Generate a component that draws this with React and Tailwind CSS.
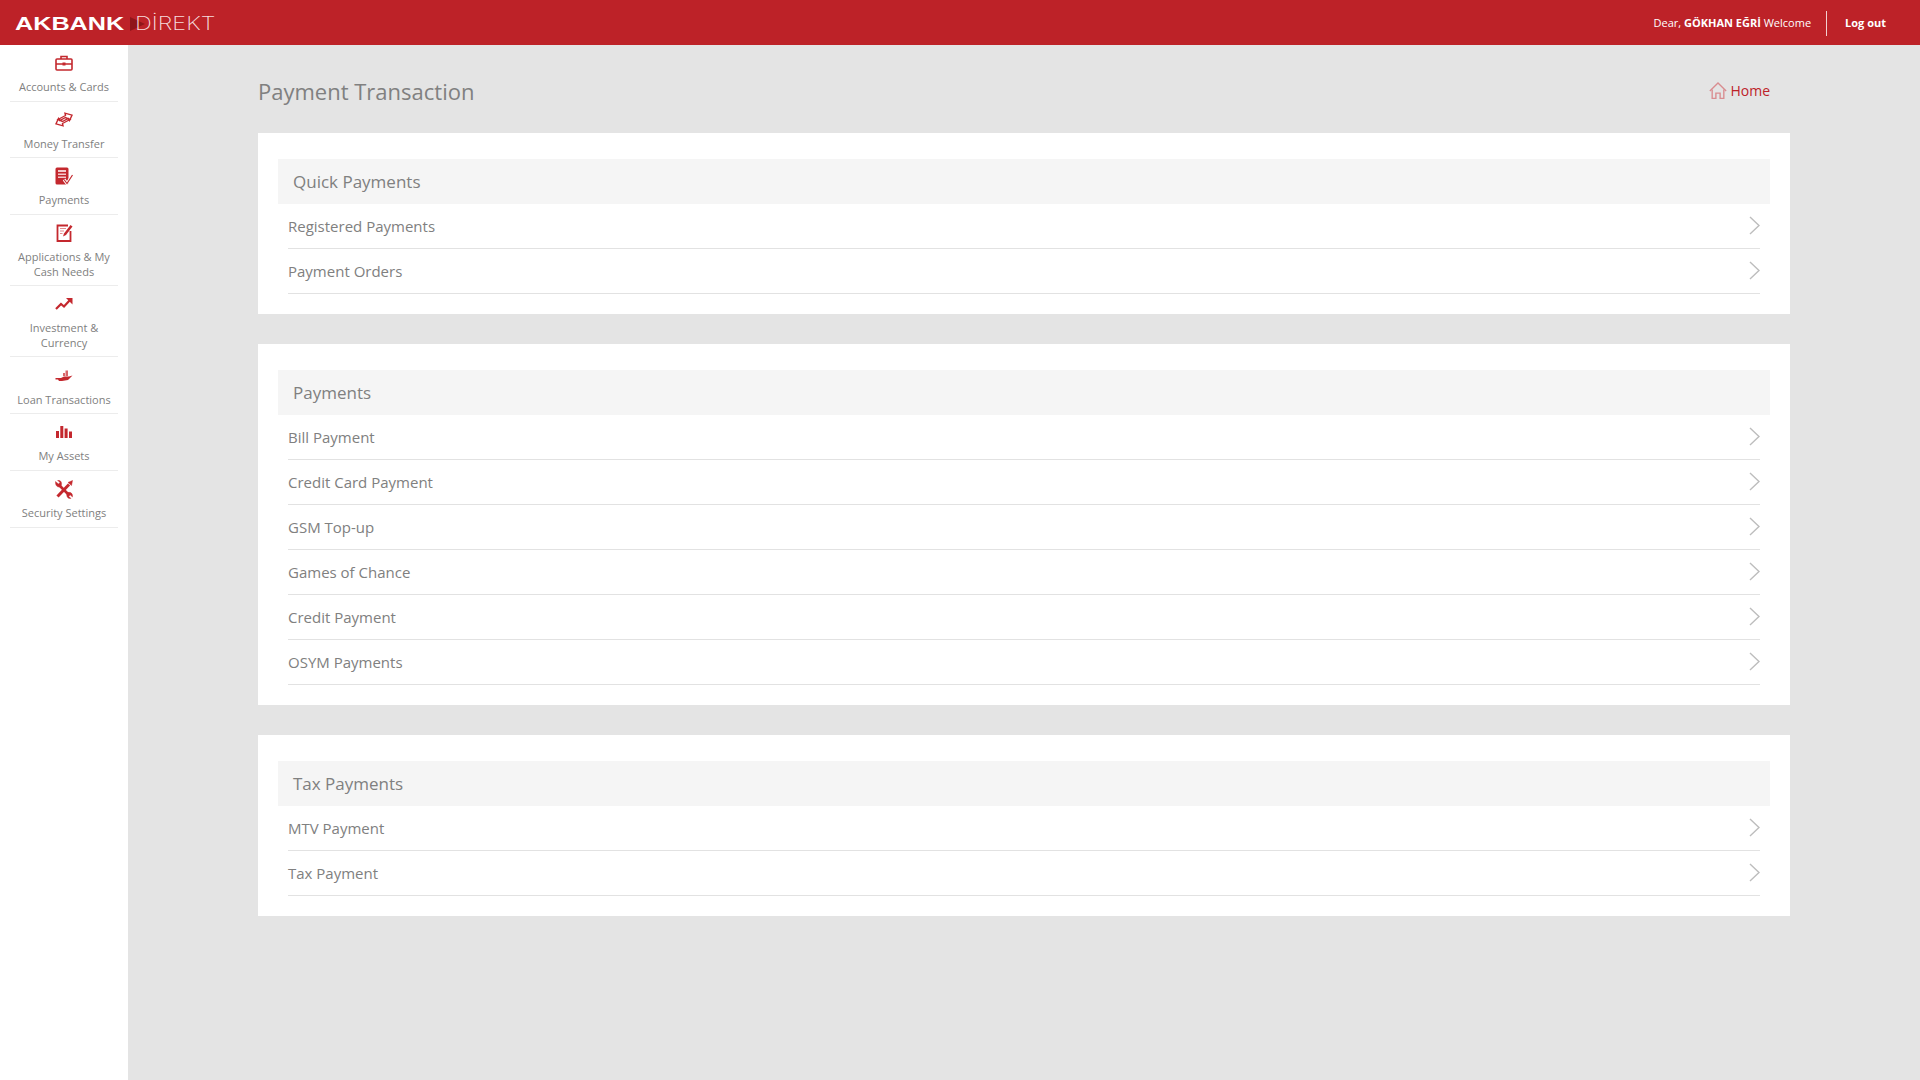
import React from 'react';

const Briefcase = () => (
    <svg width="18" height="16" viewBox="0 0 18 16" fill="none" stroke="#c4282e" strokeWidth="1.6">
        <rect x="1" y="4" width="16" height="11" rx="1" />
        <path d="M6 4V1.5h6V4M1 9h16" />
        <rect x="7.5" y="7.5" width="3" height="3" fill="#c4282e" stroke="none" />
    </svg>
);

const Transfer = () => (
    <svg width="18" height="15" viewBox="0 0 18 15" fill="none" stroke="#c4282e" strokeWidth="1.4">
        <path d="M3 7.5 L10.5 3.5 L10 1.2 L17 3.2 L14.5 8.5 L13.2 6.5 L7.5 9.5 Z" />
        <path d="M15 7.5 L7.5 11.5 L8 13.8 L1 11.8 L3.5 6.5 L4.8 8.5 L10.5 5.5 Z" />
    </svg>
);

const PaymentsIcon = () => (
    <svg width="18" height="18" viewBox="0 0 18 18" fill="none">
        <rect x="0.5" y="0.5" width="13" height="17" rx="1.5" fill="#c4282e" />
        <rect x="3" y="3" width="8" height="2" fill="#f3c9cb" />
        <rect x="3" y="6.5" width="8" height="1.5" fill="#f3c9cb" />
        <rect x="3" y="9.5" width="8" height="1.5" fill="#f3c9cb" />
        <path d="M9 12.5 L12 16.5 L17.5 8" stroke="#fff" strokeWidth="3" />
        <path d="M9 12.5 L12 16.5 L17.5 8" stroke="#c4282e" strokeWidth="1.2" />
    </svg>
);

const ApplicationsIcon = () => (
    <svg width="17" height="18" viewBox="0 0 17 18" fill="none">
        <path d="M12 1.5H1.5V17H14.5V7" stroke="#c4282e" strokeWidth="1.8" />
        <path d="M4 4.5H10M4 7H8M4 9.5H6.5" stroke="#e58a8d" strokeWidth="1" />
        <path d="M7 12.5 L8 9.5 L14.5 1 L16.5 2.5 L10 11 Z" fill="#c4282e" />
    </svg>
);

const Trend = () => (
    <svg width="18" height="13" viewBox="0 0 18 13" fill="none">
        <path d="M1 12 L6 7 L9 9.5 L15 3" stroke="#c4282e" strokeWidth="2.2" />
        <path d="M11 1 H17.5 V7.5 Z" fill="#c4282e" />
    </svg>
);

const LoanIcon = () => (
    <svg width="18" height="12" viewBox="0 0 18 12" fill="none">
        <path d="M0.5 8 H6 L9 6.5 H14 L17.5 5.5 L13 10 L7 11 H4 L3 9.5 H0.5 Z" fill="#c4282e" />
        <rect x="8" y="3" width="2" height="3" fill="#d9666a" />
        <rect x="10.5" y="0.5" width="2.5" height="5.5" fill="#d9666a" />
    </svg>
);

const Bars = () => (
    <svg width="16" height="12" viewBox="0 0 16 12" fill="#c4282e">
        <rect x="0" y="5" width="3" height="7" />
        <rect x="4.3" y="0" width="3" height="12" />
        <rect x="8.6" y="2.5" width="3" height="9.5" />
        <rect x="13" y="5.5" width="3" height="6.5" />
    </svg>
);

const Tools = () => (
    <svg width="18" height="19" viewBox="0 0 18 19" fill="none" stroke="#c4282e" className="mt-[1px]">
        <path d="M2.5 16.5 L14 4.5" strokeWidth="3" />
        <path d="M13 2.5 L17.5 0.5 L16.5 5.5 Z" fill="#c4282e" strokeWidth="0.5" />
        <path d="M4.5 5.5 L14.5 15.5" strokeWidth="2.6" />
        <path d="M0.5 1.5 L3.5 4 L5 2.5 L2.5 0.3 C6 -0.2 7.5 3 6 6 L5 7 C2 7.5 0 5 0.5 1.5 Z" fill="#c4282e" strokeWidth="0.4" />
        <path d="M17.5 17 L15 14.8 L13.7 16.2 L16 18.5 C13 19 11 16.5 12 13.5 L13 12.5 C16 11.8 18 14 17.5 17 Z" fill="#c4282e" strokeWidth="0.4" />
    </svg>
);

const menu = [
    { label: 'Accounts & Cards', icon: <Briefcase />, h: 'h-[57px]' },
    { label: 'Money Transfer', icon: <Transfer />, h: 'h-[56px]' },
    { label: 'Payments', icon: <PaymentsIcon />, h: 'h-[57px]' },
    { label: 'Applications & My Cash Needs', icon: <ApplicationsIcon />, h: 'h-[71px]' },
    { label: 'Investment & Currency', icon: <Trend />, h: 'h-[71px]' },
    { label: 'Loan Transactions', icon: <LoanIcon />, h: 'h-[57px] pt-[1px]' },
    { label: 'My Assets', icon: <Bars />, h: 'h-[57px]' },
    { label: 'Security Settings', icon: <Tools />, h: 'h-[57px]' },
];

const sections = [
    { title: 'Quick Payments', rows: ['Registered Payments', 'Payment Orders'] },
    { title: 'Payments', rows: ['Bill Payment', 'Credit Card Payment', 'GSM Top-up', 'Games of Chance', 'Credit Payment', 'OSYM Payments'] },
    { title: 'Tax Payments', rows: ['MTV Payment', 'Tax Payment'] },
];

const Chevron = () => (
    <svg width="11" height="19" viewBox="0 0 11 19" fill="none" stroke="#bdbdbd" strokeWidth="1.4" className="-mt-[2px]">
        <path d="M1 1 L10 9.5 L1 18" />
    </svg>
);

const HomeIcon = () => (
    <svg width="18" height="18" viewBox="0 0 17 17" fill="none" stroke="#d98d90" strokeWidth="1.3">
        <path d="M0.8 8.5 L8.5 1 L16.2 8.5" />
        <path d="M3 7 V15.5 H6.5 V10.5 H10.5 V15.5 H14 V7" />
    </svg>
);

const App = () => {
    return (
        <div className="min-h-[1080px] bg-[#e4e4e4] font-['Open_Sans','Noto_Sans',sans-serif]">
            <header className="h-[45px] bg-[#bd2228] flex items-center justify-between pl-[15px] pr-[34px]">
                <div className="flex items-center h-[45px] pt-[2px] text-white">
                    <span className="font-['Liberation_Sans',sans-serif] font-bold text-[18px] w-[115px] origin-left scale-x-[1.4] leading-none">AKBANK</span>
                    <svg width="15" height="14" viewBox="0 0 15 14"><path d="M0 0 L15 7 L0 14 Z" fill="#8f161b" /></svg>
                    <span className="font-['Inter',sans-serif] font-extralight text-[18px] origin-left scale-x-[1.3] text-[#f6dcdd] leading-none -ml-[10px]">DİREKT</span>
                </div>
                <div className="flex items-center text-white text-[11px] h-[45px] pt-[1px]">
                    <span>Dear, <b>GÖKHAN EĞRİ</b> Welcome</span>
                    <span className="w-px h-[25px] bg-[#f2d0d1] ml-[15px] mr-[18px]"></span>
                    <b>Log out</b>
                </div>
            </header>
            <div className="flex">
                <aside className="w-[128px] min-h-[1035px] bg-white shrink-0 px-[10px]">
                    {menu.map((item) => (
                        <div key={item.label} className={`${item.h} flex flex-col items-center border-b border-[#ececec] text-center`}>
                            <div className="h-[34px] flex items-center justify-center pt-[1px]">{item.icon}</div>
                            <span className="text-[11px] leading-[15px] text-[#808080]">{item.label}</span>
                        </div>
                    ))}
                </aside>
                <main className="w-[1532px] ml-[130px] shrink-0">
                    <div className="h-[88px] flex items-center justify-between pr-[20px]">
                        <h1 className="text-[22px] text-[#808080] font-normal mt-[4px]">Payment Transaction</h1>
                        <div className="flex items-center gap-[3px] text-[14px] text-[#bd2228] mt-[3px]">
                            <HomeIcon />
                            <span>Home</span>
                        </div>
                    </div>
                    <div className="flex flex-col gap-[30px]">
                        {sections.map((section) => (
                            <section key={section.title} className="bg-white px-[20px] pt-[26px] pb-[20px]">
                                <div className="h-[45px] bg-[#f5f5f5] flex items-center px-[15px] text-[17px] text-[#808080]">{section.title}</div>
                                <ul className="px-[10px]">
                                    {section.rows.map((row) => (
                                        <li key={row} className="h-[45px] flex items-center justify-between border-b border-[#e2e2e2] text-[15px] text-[#808080]">
                                            <span>{row}</span>
                                            <Chevron />
                                        </li>
                                    ))}
                                </ul>
                            </section>
                        ))}
                    </div>
                </main>
            </div>
        </div>
    );
};

export default App;
